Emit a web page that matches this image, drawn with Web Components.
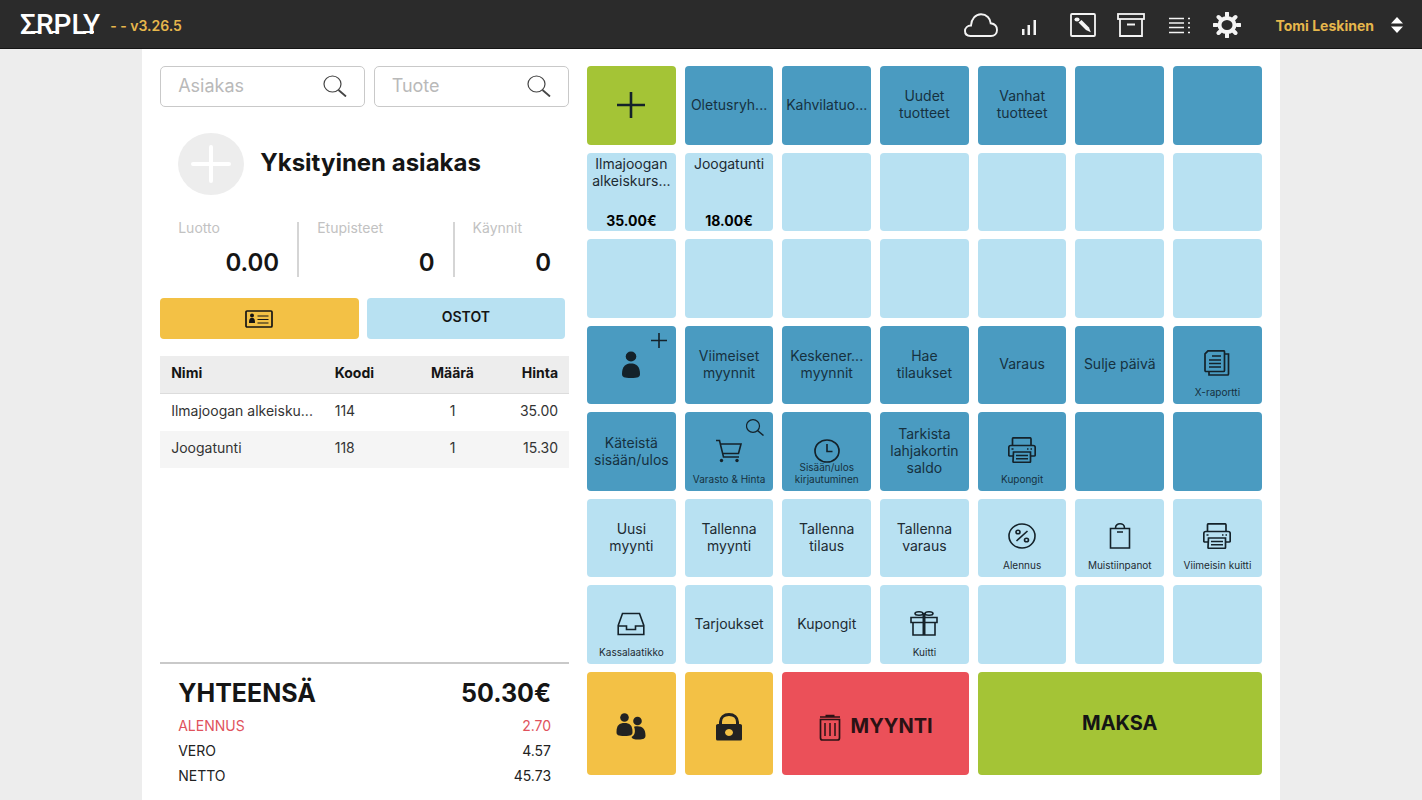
<!DOCTYPE html>
<html lang="fi">
<head>
<meta charset="utf-8">
<meta name="viewport" content="width=device-width, initial-scale=1">
<title>Erply POS</title>
<style>
	:root{
		--dark: #2b2b2b;
		--page: #ededed;
		--line: #c9c9c9;
		--muted: #c2c2c2;
		--gold: #e6b74c;
		--yellow: #f3c145;
		--blue: #4a9bc1;
		--sky: #b8e1f2;
		--green: #a4c436;
		--red: #eb5059;
		--ink: #151515;
	}
	body{
		margin: 0;
		background: var(--page);
		color: var(--ink);
		font-family: Inter, "Open Sans", sans-serif;
		font-size: 14px;
	}
</style>
</head>
<body>
<pos-app>
	<pos-header slot="header" version="- - v3.26.5" user="Tomi Leskinen"></pos-header>

	<pos-sale slot="sale">
		<pos-search slot="search" style="flex: 204" label="Asiakas"></pos-search>
		<pos-search slot="search" style="flex: 195" label="Tuote"></pos-search>
		<pos-customer slot="customer" name="Yksityinen asiakas">
			<pos-stat style="width: 34%" label="Luotto">0.00</pos-stat>
			<pos-stat style="width: 38%" label="Etupisteet">0</pos-stat>
			<pos-stat style="width: 28%" label="Käynnit">0</pos-stat>
		</pos-customer>
		<pos-cart slot="cart"></pos-cart>
		<pos-totals slot="totals"></pos-totals>
	</pos-sale>

	<pos-grid slot="grid">
		<pos-tile tone="green" icon="plus" title="Lisää"></pos-tile>
		<pos-tile tone="blue">Oletusryh...</pos-tile>
		<pos-tile tone="blue">Kahvilatuo...</pos-tile>
		<pos-tile tone="blue">Uudet<br>tuotteet</pos-tile>
		<pos-tile tone="blue">Vanhat<br>tuotteet</pos-tile>
		<pos-tile tone="blue"></pos-tile>
		<pos-tile tone="blue"></pos-tile>

		<pos-tile price="35.00€">Ilmajoogan<br>alkeiskurs...</pos-tile>
		<pos-tile price="18.00€">Joogatunti</pos-tile>
		<pos-tile></pos-tile>
		<pos-tile></pos-tile>
		<pos-tile></pos-tile>
		<pos-tile></pos-tile>
		<pos-tile></pos-tile>

		<pos-tile></pos-tile>
		<pos-tile></pos-tile>
		<pos-tile></pos-tile>
		<pos-tile></pos-tile>
		<pos-tile></pos-tile>
		<pos-tile></pos-tile>
		<pos-tile></pos-tile>

		<pos-tile tone="blue" icon="person" corner="plusSmall" title="Lisää asiakas"></pos-tile>
		<pos-tile tone="blue">Viimeiset<br>myynnit</pos-tile>
		<pos-tile tone="blue">Keskener...<br>myynnit</pos-tile>
		<pos-tile tone="blue">Hae<br>tilaukset</pos-tile>
		<pos-tile tone="blue">Varaus</pos-tile>
		<pos-tile tone="blue">Sulje päivä</pos-tile>
		<pos-tile tone="blue" icon="report" small>X-raportti</pos-tile>

		<pos-tile tone="blue">Käteistä<br>sisään/ulos</pos-tile>
		<pos-tile tone="blue" icon="cart" corner="searchSmall" small>Varasto &amp; Hinta</pos-tile>
		<pos-tile tone="blue" icon="clock" small>Sisään/ulos<br>kirjautuminen</pos-tile>
		<pos-tile tone="blue">Tarkista<br>lahjakortin<br>saldo</pos-tile>
		<pos-tile tone="blue" icon="printer" small>Kupongit</pos-tile>
		<pos-tile tone="blue"></pos-tile>
		<pos-tile tone="blue"></pos-tile>

		<pos-tile>Uusi<br>myynti</pos-tile>
		<pos-tile>Tallenna<br>myynti</pos-tile>
		<pos-tile>Tallenna<br>tilaus</pos-tile>
		<pos-tile>Tallenna<br>varaus</pos-tile>
		<pos-tile icon="percent" small>Alennus</pos-tile>
		<pos-tile icon="bag" small>Muistiinpanot</pos-tile>
		<pos-tile icon="printer" small>Viimeisin kuitti</pos-tile>

		<pos-tile icon="drawer" small>Kassalaatikko</pos-tile>
		<pos-tile>Tarjoukset</pos-tile>
		<pos-tile>Kupongit</pos-tile>
		<pos-tile icon="gift" small>Kuitti</pos-tile>
		<pos-tile></pos-tile>
		<pos-tile></pos-tile>
		<pos-tile></pos-tile>

		<pos-tile tone="yellow" icon="people" title="Myyjät"></pos-tile>
		<pos-tile tone="yellow" icon="lock" title="Lukitse"></pos-tile>
		<pos-tile tone="red" icon="trash" large style="grid-column: span 2">MYYNTI</pos-tile>
		<pos-tile tone="green" large style="grid-column: span 3">MAKSA</pos-tile>
	</pos-grid>
</pos-app>

<script>
// name: [width, height, markup]
const ICONS = {
	logoJoins: [80, 2, '<path d="M11 0h9v2h-9zM32 0h7v2h-7zM63 0h11v2H63z" fill="currentColor" stroke="none"/>'],
	cloud: [34, 24, '<path d="M6.5 23C3 23 1 20.8 1 18c0-3 2.500-5.400 6-5.500C7.400 6 11.500 1.200 17 1.200S26.500 5.500 26.700 10.300C30.500 10.800 33 13.500 33 17s-2.500 6-6 6z" stroke-width="1.900"/>'],
	bars: [16, 22, '<path d="M1 15h2.500v6H1zM6.500 11H9v10H6.500zM12.500 6H15v15h-2.500z" fill="currentColor" stroke="none"/>'],
	edit: [26, 24, '<rect x="1" y="1" width="24" height="22" rx="1" stroke-width="1.800"/><g fill="currentColor" stroke="none"><ellipse cx="7" cy="6.500" rx="2.600" ry="2"/><path d="M8.500 9.500l3-2.500 7.500 7.500 1.800 4.700-4.800-2.200z"/></g>'],
	archive: [28, 24, '<g stroke-width="1.800"><rect x="1" y="1" width="26" height="5"/><path d="M3 6v17h22V6M10 11.500h8"/></g>'],
	list: [21, 17, '<path d="M0 1.500h15M0 6h15M0 10.500h15M0 15.500h15M19 1.500h2M19 6h2M19 10.500h2M19 15.500h2" stroke-width="1.500"/>'],
	gear: [28, 26, '<ellipse cx="14" cy="13" rx="7.500" ry="7" stroke-width="4"/><path d="M14 1v3M14 22v3M1 13h3M24 13h3M5.500 5l2 2M20.500 19l2 2M5.500 21l2-2M20.500 7l2-2" stroke-width="4" stroke-linecap="round"/>'],
	sort: [14, 18, '<path d="M7 1l6 6.500H1zM7 17l6-6.500H1z" fill="currentColor" stroke="none"/>'],
	search: [24, 22, '<ellipse cx="9.500" cy="9" rx="8.500" ry="8"/><path d="M15.500 15l7.500 6.500" stroke-width="1.800"/>'],
	searchSmall: [18, 17, '<ellipse cx="7" cy="7" rx="6.500" ry="6.300" stroke-width="1.200"/><path d="M11.500 11.500l6 5" stroke-width="1.500"/>'],
	plus: [28, 26, '<path d="M14 0v26M0 13h28" stroke-width="2.600"/>'],
	plusSmall: [16, 15, '<path d="M8 0v15M0 7.500h16" stroke-width="1.600"/>'],
	plusRound: [40, 38, '<path d="M20 2v34M2 19h36" stroke-width="4" stroke-linecap="round"/>'],
	card: [28, 18, '<rect x="1" y="1" width="26" height="16" rx="1" stroke-width="1.700"/><g fill="currentColor" stroke="none"><circle cx="7" cy="5.500" r="2"/><path d="M4 13c0-5 1.500-5 3-5s3 0 3 5z"/></g><path d="M12.500 6h11M12.500 9.500h11M12.500 13h11"/>'],
	person: [18, 28, '<g fill="currentColor" stroke="none"><ellipse cx="9" cy="5.500" rx="5.300" ry="5"/><path d="M0 23c0-8 4-10.500 9-10.500S18 15 18 23c0 3-2 4-9 4s-9-1-9-4z"/></g>'],
	people: [30, 28, '<g fill="currentColor" stroke="none"><circle cx="8.500" cy="4.500" r="4.300"/><path d="M.500 19c0-7 3-9 8-9s8 2 8 9c0 3-1.500 4-8 4s-8-1-8-4z"/><circle cx="21.500" cy="8" r="4.300"/><path d="M18 13.700c7-1.500 11.500 1 11.500 8.800 0 3-2 4-7 4-4 0-6.500-.500-7-2.500 3-1.500 4.500-5.500 2.500-10.300z"/></g>'],
	lock: [26, 28, '<path d="M4.500 12v-3c0-4.500 3.500-7.500 8.500-7.500S21.500 4.500 21.500 9v3" stroke-width="3"/><path d="M2 11h22q2 0 2 1.500V26q0 1.500-1.500 1.500h-23Q0 27.500 0 26V12.500Q0 11 2 11zm11 5a4 3.500 0 1 0 .010 0z" fill="currentColor" stroke="none"/>'],
	trash: [22, 28, '<path d="M1 4h20M6.500 2.500h9M1.500 6.500h19V25q0 2-2 2h-15q-2 0-2-2z" stroke-width="1.700"/><path d="M6 10v13M11 10v13M16 10v13" stroke-width="1.500"/>'],
	report: [26, 26, '<path d="M4 .800h15.500q1 0 1 1V20.500q0 1-1 1H2q-1 0-1-1V3.800zM21 4h3.500v20q0 1-1 1H5v-3" stroke-width="1.700"/><path d="M8 6h9M5 10h12M5 13.500h12M5 17h12" stroke-width="1.500"/>'],
	cart: [28, 24, '<path d="M1 1.500h3.500l4 16.500H24M5.200 5H26l-2.500 9.500H7.500" stroke-width="1.600"/><circle cx="6.500" cy="21.500" r="1.700" fill="currentColor" stroke="none"/><circle cx="22" cy="21.500" r="1.700" fill="currentColor" stroke="none"/>'],
	clock: [26, 24, '<ellipse cx="13" cy="12" rx="12" ry="11" stroke-width="1.700"/><path d="M13 5v7.500h5.500" stroke-width="1.600"/>'],
	printer: [28, 26, '<g stroke-width="1.700"><path d="M4.500 8.500V2q0-1.200 1-1.200h16.500q1 0 1 1.200v6.500M5 19H1.800q-1 0-1-1v-7.500q0-2 2-2h22.400q2 0 2 2V18q0 1-1 1H23"/><path d="M5.500 15h17v9.500q0 .800-1 .800H6q-1 0-1-.800z"/></g><path d="M8 18.500h12M8 21.800h12M3.500 12h2M19 12h1.500M22.500 12H24" stroke-width="1.500"/>'],
	percent: [28, 26, '<ellipse cx="14" cy="13" rx="13" ry="12" stroke-width="1.600"/><path d="M19.500 8l-11 10" stroke-width="1.600"/><ellipse cx="10" cy="9" rx="2" ry="1.800" stroke-width="1.600"/><ellipse cx="18.500" cy="17" rx="2" ry="1.800" stroke-width="1.600"/>'],
	bag: [22, 26, '<path d="M6.500 5C6.500 2.500 8.500.800 11 .800S15.500 2.500 15.500 5M1.500 5.500h19v19.500h-19zM8 9h6" stroke-width="1.600"/>'],
	drawer: [28, 24, '<path d="M1.200 13.500L5.500 1.500h17l4.300 12v9H1.200zM1.200 14H9.500v3.500h9V14h8.300" stroke-width="1.600"/>'],
	gift: [28, 26, '<g stroke-width="1.600"><path d="M1 7.500h26v5H1zM3 12.500V25h22V12.500"/><ellipse cx="9" cy="3.500" rx="4" ry="1.700"/><ellipse cx="19" cy="3.500" rx="4" ry="1.700"/></g><path d="M14 3v22" stroke-width="3"/>']
};

const svg = (name) => {
	const [w, h, body] = ICONS[name];
	return `<svg width="${w}" height="${h}" viewBox="0 0 ${w} ${h}" fill="none" stroke="currentColor" stroke-width="1.2" aria-hidden="true">${body}</svg>`;
};

const RESET = `
	:host, *{ box-sizing: border-box; }
	button{
		border: 0;
		padding: 0;
		background: none;
		color: inherit;
		font: inherit;
		cursor: pointer;
	}
	svg{ display: block; flex: none; }
`;

class PosElement extends HTMLElement{
	constructor(){
		super();
		this.attachShadow({mode:'open'});
	}
	connectedCallback(){
		this.shadowRoot.innerHTML = `<style>${RESET}${this.styles()}</style>${this.render()}`;
	}
}

customElements.define('pos-app', class extends PosElement{
	styles(){ return `
		:host{ display: flex; flex-direction: column; min-height: 100vh; }
		main{
			flex: 1;
			width: 80%;
			margin: 0 auto;
			padding: 17px 18px 0;
			display: grid;
			grid-template-columns: minmax(0, 409fr) minmax(0, 675fr);
			gap: 18px;
			background: #fff;
		}
	`; }
	render(){ return `
		<slot name="header"></slot>
		<main>
			<slot name="sale"></slot>
			<slot name="grid"></slot>
		</main>
	`; }
});

customElements.define('pos-header', class extends PosElement{
	styles(){ return `
		:host{ display: block; background: var(--dark); color: #f4f4f4; border-bottom: 1px solid #151515; }
		header{ display: flex; align-items: center; height: 48px; padding: 2px 18px 0 20px; }
		.logo{
			position: relative;
			color: #fff;
			font: 500 28px/28px Roboto, sans-serif;
			text-decoration: none;
		}
		/* strokes that tie the letters together along the baseline */
		.logo svg{ position: absolute; left: 0; bottom: 6px; }
		.version, .user{ color: var(--gold); font-size: 14px; font-weight: 600; }
		.version{ margin: 0 auto 0 10px; }
		.group{ display: flex; margin-right: 6px; }
		.group > *{ width: 48px; height: 40px; display: grid; place-items: center; }
		.user{ display: flex; align-items: center; gap: 16px; margin-left: 18px; font-weight: 700; }
		.user svg{ color: #fff; }
	`; }
	render(){ return `
		<header>
			<a class="logo" href="#">ΣRPLY${svg('logoJoins')}</a>
			<span class="version">${this.getAttribute('version')}</span>
			<div class="group">
				<span title="Yhteys">${svg('cloud')}</span>
				<span title="Signaali">${svg('bars')}</span>
			</div>
			<nav class="group">
				<button aria-label="Muokkaa">${svg('edit')}</button>
				<button aria-label="Arkisto">${svg('archive')}</button>
				<button aria-label="Lista">${svg('list')}</button>
				<button aria-label="Asetukset">${svg('gear')}</button>
			</nav>
			<button class="user">${this.getAttribute('user')}${svg('sort')}</button>
		</header>
	`; }
});

customElements.define('pos-sale', class extends PosElement{
	styles(){ return `
		:host{ display: flex; flex-direction: column; }
		.search{ display: flex; gap: 9px; margin-bottom: 26px; }
		.cart{ flex: 1; margin-top: 17px; }
	`; }
	render(){ return `
		<div class="search"><slot name="search"></slot></div>
		<slot name="customer"></slot>
		<div class="cart"><slot name="cart"></slot></div>
		<slot name="totals"></slot>
	`; }
});

customElements.define('pos-search', class extends PosElement{
	styles(){ return `
		:host{ display: block; min-width: 0; }
		label{
			display: flex;
			align-items: center;
			height: 41px;
			padding: 0 17px 2px;
			border: 1px solid var(--line);
			border-radius: 5px;
			color: #444;
		}
		input{
			flex: 1;
			min-width: 0;
			padding: 0;
			border: 0;
			outline: 0;
			background: none;
			color: var(--ink);
			font: inherit;
			font-size: 18px;
		}
		input::placeholder{ color: #b9b9b9; opacity: 1; }
	`; }
	render(){
		const label = this.getAttribute('label');
		return `<label><input type="text" placeholder="${label}" aria-label="${label}">${svg('search')}</label>`;
	}
});

customElements.define('pos-customer', class extends PosElement{
	styles(){ return `
		:host{ display: block; }
		.who{ display: flex; align-items: center; gap: 16px; padding-left: 18px; }
		.avatar{
			width: 66px;
			height: 62px;
			border-radius: 50%;
			display: grid;
			place-items: center;
			background: var(--page);
			color: #fff;
		}
		h1{ margin: 0 0 2px; font-size: 24px; line-height: 30px; font-weight: 700; }
		.stats{ display: flex; margin: 27px 0 21px; }
		.actions{ display: flex; gap: 8px; padding-right: 4px; }
		.actions button{
			flex: 1;
			height: 41px;
			display: grid;
			place-items: center;
			border-radius: 4px;
			background: var(--yellow);
			font-weight: 600;
		}
		.actions .buys{ padding-bottom: 4px; background: var(--sky); }
	`; }
	render(){ return `
		<div class="who">
			<button class="avatar" aria-label="Valitse asiakas">${svg('plusRound')}</button>
			<h1>${this.getAttribute('name')}</h1>
		</div>
		<div class="stats"><slot></slot></div>
		<div class="actions">
			<button aria-label="Asiakaskortti">${svg('card')}</button>
			<button class="buys">OSTOT</button>
		</div>
	`; }
});

customElements.define('pos-stat', class extends PosElement{
	styles(){ return `
		:host{ display: block; padding: 0 18px; border-right: 2px solid #d5d5d5; }
		:host(:last-child){ border: 0; }
		.label{ color: var(--muted); line-height: 12px; white-space: nowrap; }
		.value{ margin-top: 14px; font-size: 24px; line-height: 29px; font-weight: 600; text-align: right; }
	`; }
	render(){ return `
		<div class="label">${this.getAttribute('label')}</div>
		<div class="value"><slot></slot></div>
	`; }
});

customElements.define('pos-cart', class extends PosElement{
	get lines(){
		return [
			['Ilmajoogan alkeisku...', '114', '1', '35.00'],
			['Joogatunti', '118', '1', '15.30']
		];
	}
	styles(){ return `
		:host{ display: block; }
		table{ width: 100%; table-layout: fixed; border-collapse: separate; border-spacing: 0; }
		th, td{ height: 37px; padding: 0 11px 4px; text-align: left; white-space: nowrap; }
		td{ color: #333; }
		th{ height: 38px; background: var(--page); border-bottom: 1px solid #dcdcdc; font-weight: 700; }
		.name{ width: 40%; }
		.code{ width: 23%; }
		.qty{ width: 17%; text-align: center; }
		.price{ width: 20%; text-align: right; }
		tbody tr:nth-child(even){ background: #f5f5f5; }
	`; }
	render(){
		const cols = ['name', 'code', 'qty', 'price'];
		const row = (cells, tag) => `<tr>${cells.map((c, i) => `<${tag} class="${cols[i]}">${c}</${tag}>`).join('')}</tr>`;
		return `
			<table>
				<thead>${row(['Nimi', 'Koodi', 'Määrä', 'Hinta'], 'th')}</thead>
				<tbody>${this.lines.map(l => row(l, 'td')).join('')}</tbody>
			</table>
		`;
	}
});

customElements.define('pos-totals', class extends PosElement{
	styles(){ return `
		:host{ display: block; padding: 10px 18px 12px; border-top: 2px solid var(--line); }
		dl{ margin: 0; }
		div{ display: flex; justify-content: space-between; line-height: 25px; color: #222; }
		dd{ margin: 0; }
		.sum{ color: var(--ink); font-size: 25px; line-height: 39px; font-weight: 700; }
		.discount{ color: #e0525c; }
	`; }
	render(){ return `
		<dl>
			<div class="sum"><dt>YHTEENSÄ</dt><dd>50.30€</dd></div>
			<div class="discount"><dt>ALENNUS</dt><dd>2.70</dd></div>
			<div><dt>VERO</dt><dd>4.57</dd></div>
			<div><dt>NETTO</dt><dd>45.73</dd></div>
		</dl>
	`; }
});

customElements.define('pos-grid', class extends PosElement{
	styles(){ return `
		:host{
			display: grid;
			grid-template-columns: repeat(7, minmax(0, 1fr));
			grid-template-rows: repeat(7, minmax(78px, 1fr)) 103px;
			gap: 8px 9px;
			margin-bottom: 25px;
		}
	`; }
	render(){ return '<slot></slot>'; }
});

customElements.define('pos-tile', class extends PosElement{
	styles(){ return `
		:host{ display: block; --tone: var(--sky); --text: #1d2b32; }
		:host([tone=blue]){ --tone: var(--blue); --text: #16313f; }
		:host([tone=green]){ --tone: var(--green); --text: var(--ink); }
		:host([tone=yellow]){ --tone: var(--yellow); --text: #222; }
		:host([tone=red]){ --tone: var(--red); --text: #2b1214; }
		button{
			position: relative;
			width: 100%;
			height: 100%;
			display: flex;
			flex-direction: column;
			align-items: center;
			justify-content: center;
			border-radius: 4px;
			background: var(--tone);
			color: var(--text);
			line-height: 17px;
			white-space: nowrap;
		}
		svg{ color: #14222a; }
		.label{ padding-bottom: 2px; }
		:host([price]) button{ justify-content: space-between; padding: 2px 0; }
		.price{ color: #000; font-weight: 700; }

		/* a second caption line grows up over the icon */
		:host([small]) button{ justify-content: flex-end; padding-bottom: 6px; gap: 10px; }
		:host([small]) .label{
			height: 12px;
			display: flex;
			align-items: flex-end;
			padding: 0;
			font-size: 10px;
			line-height: 12px;
		}
		.corner{ position: absolute; top: 7px; right: 9px; }

		:host([large]) button{ flex-direction: row; gap: 10px; font-size: 20px; font-weight: 700; }
		:host([large]) .label{ padding: 0; }
		:host([tone=yellow]) button, :host([tone=red]) button{ padding-top: 7px; }
		:host([tone=yellow]) svg, :host([tone=red]) svg{ color: inherit; }
	`; }
	render(){
		const icon = this.getAttribute('icon');
		const corner = this.getAttribute('corner');
		const price = this.getAttribute('price');
		const title = this.getAttribute('title');
		return `
			<button${title ? ` aria-label="${title}"` : ''}>
				${corner ? `<span class="corner">${svg(corner)}</span>` : ''}
				${icon ? svg(icon) : ''}
				${this.textContent.trim() ? '<span class="label"><span><slot></slot></span></span>' : ''}
				${price ? `<span class="price">${price}</span>` : ''}
			</button>
		`;
	}
});
</script>
</body>
</html>
